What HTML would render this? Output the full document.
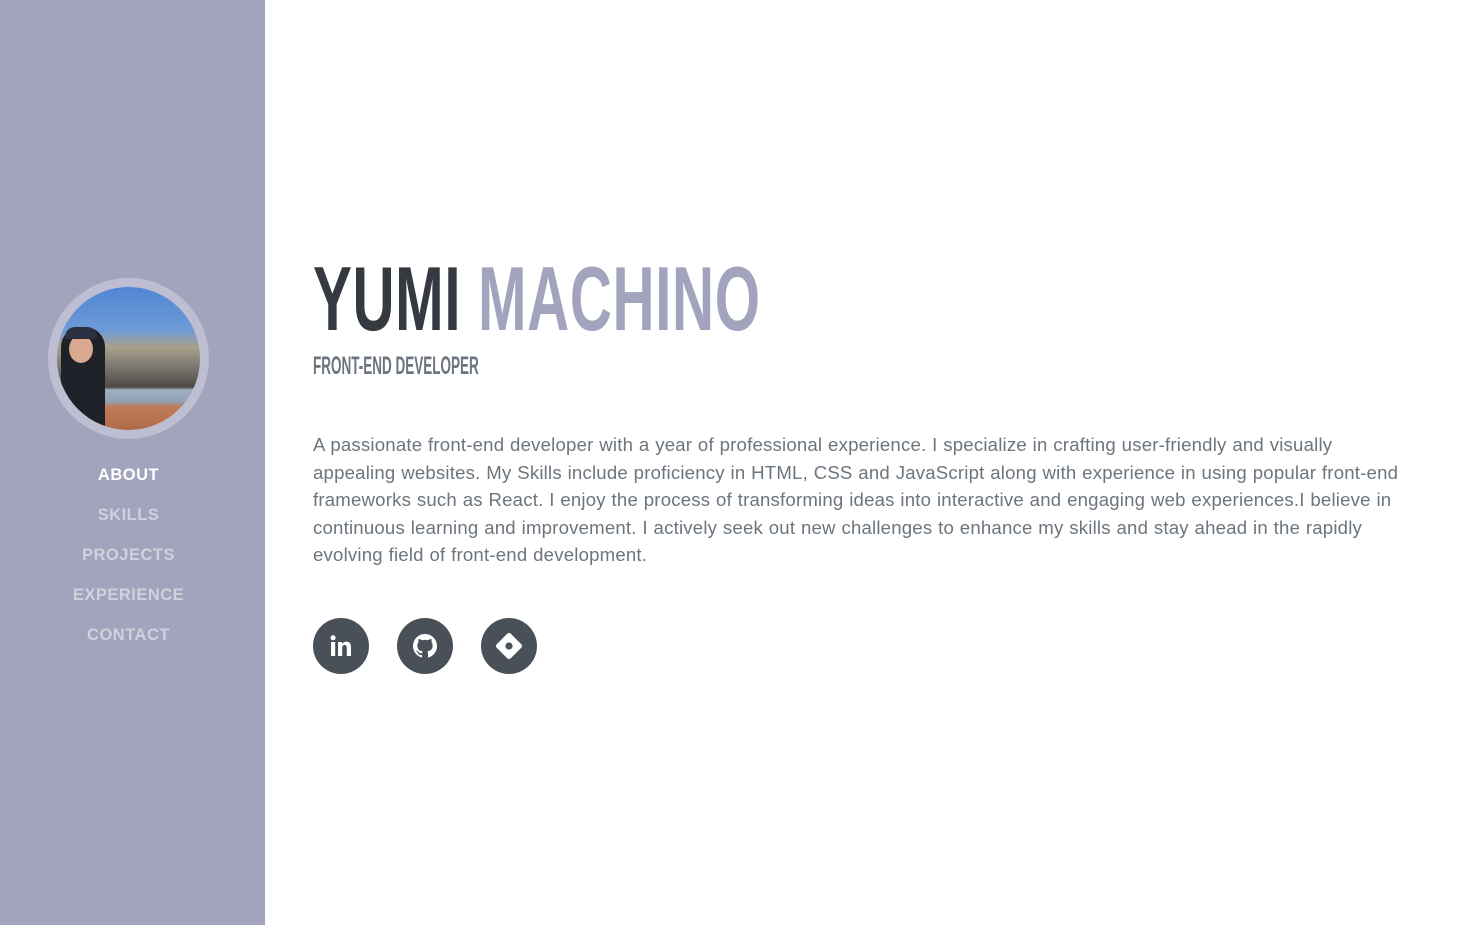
<!DOCTYPE html>
<html><head><meta charset="utf-8"><style>
*{margin:0;padding:0;box-sizing:border-box}
body{width:1473px;height:925px;overflow:hidden;background:#fff;font-family:"Liberation Sans",sans-serif;position:relative}
.side{position:absolute;left:0;top:0;width:265px;height:925px;background:#a2a3bd}
.av{position:absolute;left:48px;top:278px;width:161px;height:161px;border-radius:50%;background:#bebed2;padding:9px}
.ph{width:100%;height:100%;border-radius:50%;overflow:hidden;position:relative;background:linear-gradient(#4f86d6 0%,#6e9ad6 30%,#a9a08a 42%,#7d7a72 55%,#4c4a45 70%,#9fb0c2 72%,#8fa1b5 80%,#c07a55 84%,#b06a48 100%)}
.nav{position:absolute;left:-4px;width:265px;text-align:center;font-weight:bold;font-size:16.5px;letter-spacing:0.5px;color:rgba(255,255,255,.5)}
.h1{position:absolute;left:313px;top:250px;font-weight:bold;font-size:91px;line-height:100px;transform:scaleX(.64);transform-origin:left;white-space:nowrap;color:#343a40;letter-spacing:1px}
.h1 span{color:#a2a3bd}
.sub{position:absolute;left:313px;top:352px;font-weight:bold;font-size:25px;line-height:28px;transform:scaleX(.54);transform-origin:left;white-space:nowrap;color:#6c757d}
p{position:absolute;left:313px;top:431px;white-space:nowrap;font-size:18.6px;letter-spacing:0.2px;word-spacing:0.4px;line-height:27.6px;color:#6c757d}
.ic{position:absolute;top:618px;width:56px;height:56px;border-radius:50%;background:#495057;display:flex;align-items:center;justify-content:center;color:#fff}
</style></head><body>
<div class="side">
<div class="av"><div class="ph">
<div style="position:absolute;left:4px;top:40px;width:44px;height:100px;background:#1f2128;border-radius:20px 20px 0 0"></div>
<div style="position:absolute;left:12px;top:48px;width:24px;height:28px;background:#d9a98e;border-radius:50%"></div>
<div style="position:absolute;left:8px;top:40px;width:32px;height:12px;background:#2a3040;border-radius:10px 10px 2px 2px"></div>
</div></div>
<div class="nav" style="top:466px;color:#fff">ABOUT</div>
<div class="nav" style="top:506px">SKILLS</div>
<div class="nav" style="top:546px">PROJECTS</div>
<div class="nav" style="top:586px">EXPERIENCE</div>
<div class="nav" style="top:626px">CONTACT</div>
</div>
<div class="h1">YUMI <span>MACHINO</span></div>
<div class="sub">FRONT-END DEVELOPER</div>
<p>A passionate front-end developer with a year of professional experience. I specialize in crafting user-friendly and visually<br>appealing websites. My Skills include proficiency in HTML, CSS and JavaScript along with experience in using popular front-end<br>frameworks such as React. I enjoy the process of transforming ideas into interactive and engaging web experiences.I believe in<br>continuous learning and improvement. I actively seek out new challenges to enhance my skills and stay ahead in the rapidly<br>evolving field of front-end development.</p>
<div class="ic" style="left:313px"><svg width="22" height="22" viewBox="0 0 22 22" fill="#fff"><rect x="1" y="7" width="4.2" height="14"/><circle cx="3.1" cy="2.8" r="2.5"/><path d="M8 7h4v2c1-1.6 2.6-2.4 4.5-2.4 3.3 0 4.5 2 4.5 5.5V21h-4.2v-8c0-1.8-.5-3-2.2-3s-2.4 1.3-2.4 3v8H8z"/></svg></div>
<div class="ic" style="left:397px"><svg width="24" height="24" viewBox="0 0 16 16" fill="#fff"><path d="M8 0C3.580 0 0 3.58 0 8c0 3.54 2.29 6.53 5.470 7.59.4.07.55-.17.55-.38v-1.33c-2.23.48-2.7-1.070-2.7-1.07-.36-.92-.89-1.17-.89-1.17-.73-.5.06-.49.06-.49.8.06 1.23.83 1.23.83.71 1.22 1.87.87 2.33.66.07-.52.28-.87.5-1.07-1.78-.2-3.65-.89-3.65-3.95 0-.87.31-1.59.82-2.15-.08-.2-.36-1.02.08-2.12 0 0 .67-.21 2.2.82.64-.18 1.32-.27 2-.27s1.36.09 2 .27c1.53-1.04 2.2-.82 2.2-.82.44 1.1.16 1.92.08 2.12.51.56.82 1.27.82 2.15 0 3.07-1.87 3.75-3.65 3.950.29.25.54.73.54 1.48v2.2c0 .21.15.46.55.38A8 8 0 0016 8c0-4.42-3.58-8-8-8z"/></svg></div>
<div class="ic" style="left:481px"><svg width="26" height="26" viewBox="0 0 26 26"><path d="M13 2.5L23.5 13 13 23.5 2.5 13z" fill="#fff" stroke="#fff" stroke-width="5" stroke-linejoin="round"/><circle cx="13" cy="13" r="3.6" fill="#495057"/></svg></div>
</body></html>
